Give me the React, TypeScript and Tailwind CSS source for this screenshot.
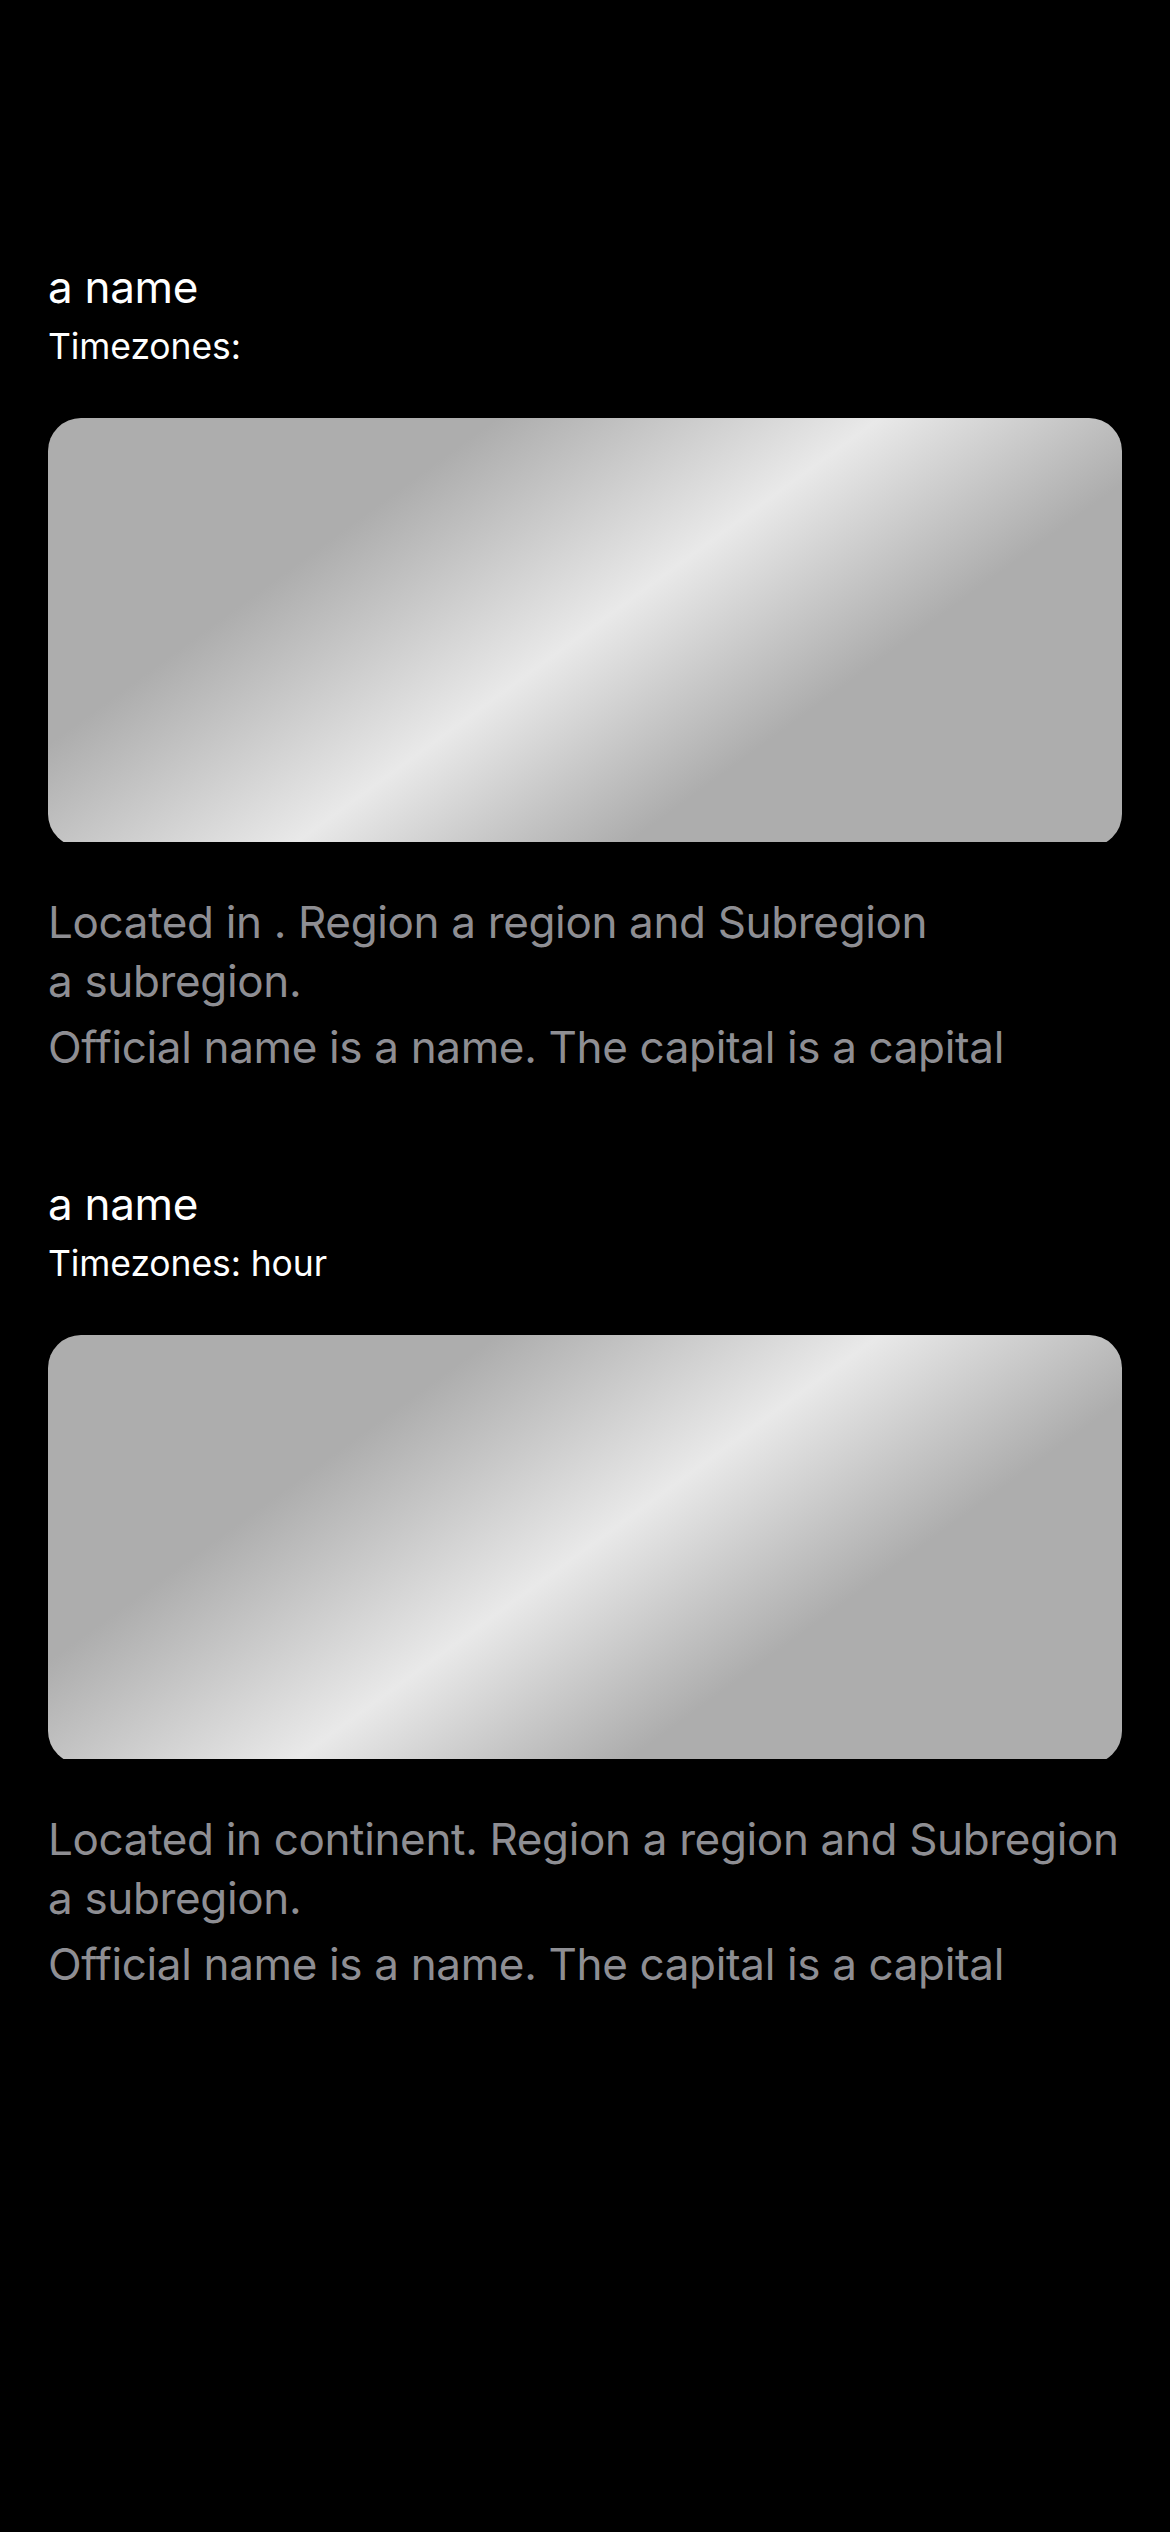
const countries = [
  {
    name: "a name",
    timezones: "",
    continent: "",
  },
  {
    name: "a name",
    timezones: "hour",
    continent: "continent",
  },
];

function CountryCard({ name, timezones, continent }: { name: string; timezones: string; continent: string }) {
  return (
    <div className="flex flex-col">
      <h2 className="text-[44px] leading-[54px] tracking-[-0.3px] text-white font-normal">{name}</h2>
      <p className="mt-[11px] text-[35.5px] leading-[44px] tracking-[-0.1px] text-white">Timezones: {timezones}</p>
      <div className="mt-[49px] h-[424px] overflow-hidden">
        <div className="h-[429px] w-full rounded-[33px] bg-[linear-gradient(144deg,#adadad_27%,#e9e9e9_50%,#adadad_70%)]" />
      </div>
      <p className="mt-[51px] text-[44px] leading-[59px] tracking-[-0.35px] text-[#8e8e93]">
        <span className="block whitespace-nowrap">Located in {continent}. Region a region and Subregion</span>
        <span className="block">a subregion.</span>
      </p>
      <p className="mt-[7px] text-[44px] leading-[59px] tracking-[-0.35px] text-[#8e8e93]">
        Official name is a name. The capital is a capital
      </p>
    </div>
  );
}

export default function App() {
  return (
    <div className="min-h-screen bg-black px-[48px] pt-[260px] font-['Inter','Liberation_Sans',sans-serif]">
      <div className="flex flex-col gap-[100px]">
        {countries.map((c, i) => (
          <CountryCard key={i} {...c} />
        ))}
      </div>
    </div>
  );
}
